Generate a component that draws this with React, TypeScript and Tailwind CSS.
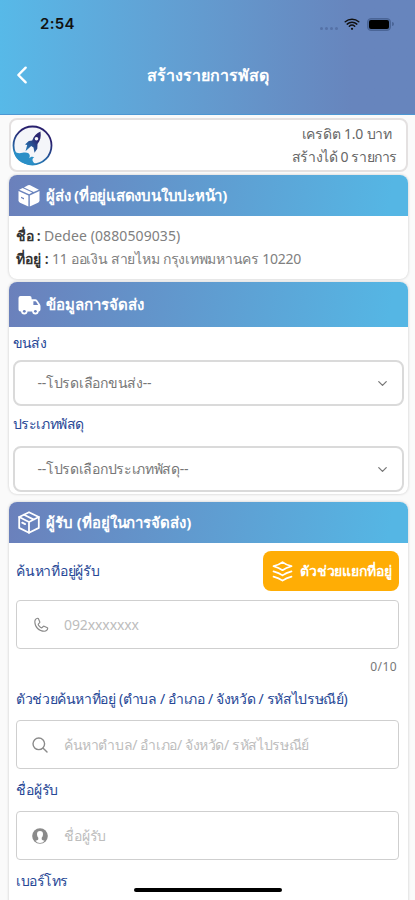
import type { ReactNode } from "react";
import { IoChevronBack, IoWifi } from "react-icons/io5";
import { PiPhone } from "react-icons/pi";
import { ChevronDown } from "lucide-react";

interface SectionProps {
  icon: ReactNode;
  title: string;
  titleClass: string;
  className: string;
  headerClass: string;
  children: ReactNode;
}

function Section({ icon, title, titleClass, className, headerClass, children }: SectionProps) {
  return (
    <section className={`flex-none overflow-hidden rounded-lg bg-white shadow-[0_0_3px_rgba(0,0,0,0.2)] ${className}`}>
      <div className={`flex items-center bg-linear-[100deg] from-[#6b80bb] to-[#55b6e4] to-95% pl-[9px] text-white ${headerClass}`}>
        <span className="flex w-7 flex-none">{icon}</span>
        <h2 className={`whitespace-nowrap text-[15px] font-bold ${titleClass}`}>{title}</h2>
      </div>
      {children}
    </section>
  );
}

function Select({ text, textClass }: { text: string; textClass: string }) {
  return (
    <button className="flex h-[46px] w-[391px] items-center justify-between rounded-lg border-2 border-[#dadada] pl-[23px] pr-[12px] text-[#777]">
      <span className={`whitespace-nowrap ${textClass}`}>{text}</span>
      <ChevronDown size={15} />
    </button>
  );
}

function Field({ icon, text, textClass }: { icon: ReactNode; text: string; textClass: string }) {
  return (
    <div className="flex h-[49px] w-[383px] items-center rounded-[4px] border border-[#cfcfcf] pl-[15px]">
      <span className="flex w-8 flex-none text-[#8a8a8a]">{icon}</span>
      <span className={`whitespace-nowrap text-[#bdbdbd] ${textClass}`}>{text}</span>
    </div>
  );
}

function BoxSolidIcon() {
  return (
    <svg width="22" height="23" viewBox="0 0 22 23" fill="currentColor">
      <path d="M10.400 11.600v10.900L2 18.700Q.5 18 .5 16.300V7.100Z" />
      <path d="M11.800 11.600 21.500 7.100v9.200q0 1.700-1.500 2.400l-8.200 3.800Z" />
      <path d="m1.200 5.800 3.400-1.700 9.600 4.300-3.100 1.800Z" />
      <path d="M5.900 3.400 10 1.300q1.100-.5 2.200 0l8.700 4.400-5.200 2.200Z" />
      <path d="m3 12.700 3 1.400v1.300L3 14Z" fill="#6b82bd" />
    </svg>
  );
}

function BoxOutlineIcon() {
  return (
    <svg width="22" height="23" viewBox="0 0 22 23" fill="none" stroke="currentColor" strokeWidth="1.800" strokeLinejoin="round" strokeLinecap="round">
      <path d="M11 1.200 20.800 6v10.900L11 21.800l-9.800-4.900V6Z" />
      <path d="M1.200 6 11 11l9.800-5M11 11v10.800M6 3.700l9.800 4.900M4.200 11.600l2.900 1.500" />
    </svg>
  );
}

function TruckIcon() {
  return (
    <svg width="23" height="20" viewBox="0 0 23 20">
      <path
        d="M2.500 1h9.200q1.900 0 1.900 2v1.300h3.600q1.300 0 2 1l2.700 4q.6.900.6 2v3.200q0 1.900-1.900 1.900H2.500Q.5 16.400.5 14.400V3q0-2 2-2Z"
        fill="currentColor"
      />
      <path d="M15.400 6.300h1.900q.6 0 1 .6l1.900 3h-4.800Z" fill="#6b82bd" />
      <circle cx="6.300" cy="16.300" r="3.200" fill="currentColor" />
      <circle cx="17.400" cy="16.300" r="3.200" fill="currentColor" />
      <circle cx="6.300" cy="16.300" r="1.400" fill="#6b82bd" />
      <circle cx="17.400" cy="16.300" r="1.400" fill="#6b82bd" />
    </svg>
  );
}

function LayersIcon() {
  return (
    <svg className="mr-[7px] flex-none" width="21" height="21" viewBox="0 0 21 21" fill="none" stroke="currentColor" strokeWidth="1.700" strokeLinejoin="round" strokeLinecap="round">
      <path d="M10.500 1.200Q14 4 19.500 5.200 14 6.600 10.500 9.200 7 6.600 1.500 5.200 7 4 10.500 1.200Z" />
      <path d="M1.500 10.400Q7 11.800 10.500 14.400 14 11.800 19.500 10.400M1.500 15.600Q7 17 10.500 19.600 14 17 19.500 15.600" />
    </svg>
  );
}

function SearchIcon() {
  return (
    <svg width="16" height="16" viewBox="0 0 16 16" fill="none" stroke="currentColor" strokeWidth="1.400" strokeLinecap="round">
      <circle cx="6.800" cy="6.800" r="5.800" />
      <path d="m11.200 11.200 3.800 3.800" />
    </svg>
  );
}

function AvatarIcon() {
  return (
    <svg width="16" height="16" viewBox="0 0 16 16">
      <circle cx="8" cy="8" r="7.800" fill="currentColor" />
      <path
        d="M8 3q3 0 3 3.200 0 2.200-1.300 3.500v1.500q.2.700 1.900 1.200l1 .4Q10.900 15 8 15t-4.600-2.200l1-.4q1.700-.5 1.900-1.200V9.700Q5 8.400 5 6.200 5 3 8 3Z"
        fill="#fff"
      />
    </svg>
  );
}

function Logo() {
  return (
    <svg width="41" height="41" viewBox="0 0 41 41">
      <defs>
        <linearGradient id="ring" x1="0.7" y1="0" x2="0.3" y2="1">
          <stop offset="0.25" stopColor="#28206d" />
          <stop offset="1" stopColor="#258fc6" />
        </linearGradient>
        <linearGradient id="rocket" x1="1" y1="0" x2="0" y2="1">
          <stop offset="0.3" stopColor="#2a2670" />
          <stop offset="1" stopColor="#2589c1" />
        </linearGradient>
      </defs>
      <circle cx="20.500" cy="20.500" r="19" fill="#f4f5f9" stroke="url(#ring)" strokeWidth="1.800" />
      <path
        d="M1.500 24.500c2.500 4 5.500 4 9 3.300 5-1.200 9 1 6.600 5.500 1.400-1.900 4-2.100 5.200-.8-2.600.5-2.600 4.600 1.500 6.700C12 41.500 2 35 1.500 24.500Z"
        fill="#2b8fc7"
      />
      <path
        d="M28.500 6.500c.8 5.500-.2 9-3 12.500l-.2 4.700-2.800 4-1-5.200-2.300-1.500-5.700 5.300 1.700-6.200-2.200-.7 3.800-3.500 3.400-.5c1.500-4 4.300-7.200 8.300-8.900Z"
        fill="url(#rocket)"
      />
      <circle cx="24.500" cy="13.700" r="1.800" fill="#f4f5f9" />
    </svg>
  );
}

export default function App() {
  return (
    <div className="relative flex h-[900px] w-[415px] flex-col overflow-hidden bg-[#fafafa] font-['Noto_Sans',sans-serif] text-sm">
      <header className="h-[115px] flex-none border-b border-[#4d97d3] bg-linear-to-r from-[#57b9e8] to-[#6785bd] to-85% pt-3">
        <div className="flex h-6 items-center justify-between pl-10 pr-[21px] text-[#111]">
          <span className="font-['Inter',sans-serif] text-[15px] font-semibold tracking-[0.3px]">2:54</span>
          <div className="flex items-center">
            <span className="flex gap-[2px] pt-2">
              {[0, 1, 2, 3].map((n) => (
                <i key={n} className="size-[3px] rounded-full bg-[#5572a7]" />
              ))}
            </span>
            <IoWifi className="ml-[5px]" size={18} />
            <span className="ml-[6px] flex h-[13px] w-6 rounded-[4px] border border-[#4a6597] bg-[#536fa2] p-px">
              <i className="w-full rounded-[2px] bg-black" />
            </span>
            <i className="ml-px h-1 w-[2px] rounded-r bg-[#4a6597]" />
          </div>
        </div>
        <div className="mt-5 grid h-[38px] grid-cols-[60px_1fr_60px] items-center text-white">
          <IoChevronBack className="ml-[9px]" size={26} />
          <h1 className="whitespace-nowrap text-center text-base font-bold">สร้างรายการพัสดุ</h1>
        </div>
      </header>

      <main className="flex flex-col pl-[9px] pr-[7px] pt-[3px]">
        <div className="flex h-[54px] flex-none items-center justify-between rounded-lg border-2 border-[#e4e1e1] bg-white pl-px pr-[9px] text-[#666]">
          <Logo />
          <div className="flex flex-col text-right leading-[23px]">
            <span className="pr-[5px] tracking-[-0.2px]">เครดิต 1.0 บาท</span>
            <span className="tracking-[-0.4px]">สร้างได้ 0 รายการ</span>
          </div>
        </div>

        <Section
          icon={<BoxSolidIcon />}
          title="ผู้ส่ง (ที่อยู่แสดงบนใบปะหน้า)"
          titleClass="tracking-[-0.23px]"
          className="mt-[3px] h-[104px]"
          headerClass="h-[41px]"
        >
          <div className="pl-[7px] pt-2 leading-[23px] text-[#808080]">
            <p className="whitespace-nowrap">
              <b className="font-semibold tracking-[-0.3px] text-[#333]">ชื่อ :</b>{" "}
              <span className="tracking-[0.1px]">Dedee (0880509035)</span>
            </p>
            <p className="whitespace-nowrap tracking-[-0.25px]">
              <b className="font-semibold tracking-normal text-[#333]">ที่อยู่ :</b> 11 ออเงิน สายไหม กรุงเทพมหานคร 10220
            </p>
          </div>
        </Section>

        <Section
          icon={<TruckIcon />}
          title="ข้อมูลการจัดส่ง"
          titleClass=""
          className="mt-[3px] h-[212px]"
          headerClass="h-[45px]"
        >
          <div className="flex flex-col items-start pl-[3.5px] text-[#264796]">
            <label className="mt-[5px] h-7 leading-[22px] tracking-[-0.6px]">ขนส่ง</label>
            <Select text="--โปรดเลือกขนส่ง--" textClass="tracking-[-0.27px]" />
            <label className="mt-[7px] h-[33px] leading-[22px] tracking-[-0.4px]">ประเภทพัสดุ</label>
            <Select text="--โปรดเลือกประเภทพัสดุ--" textClass="tracking-[-0.3px]" />
          </div>
        </Section>

        <Section
          icon={<BoxOutlineIcon />}
          title="ผู้รับ (ที่อยู่ในการจัดส่ง)"
          titleClass="tracking-[-0.05px]"
          className="mt-2 h-[420px]"
          headerClass="h-[41px]"
        >
          <div className="flex flex-col items-start pl-[7px] text-[#264796]">
            <div className="mt-2 flex h-10 w-[383px] items-center justify-between">
              <label className="whitespace-nowrap tracking-[-0.25px]">ค้นหาที่อยู่ผู้รับ</label>
              <button className="flex h-10 w-[136px] items-center rounded-lg bg-[#ffad05] pl-[9px] font-bold text-white">
                <LayersIcon />
                <span className="whitespace-nowrap tracking-[-0.15px]">ตัวช่วยแยกที่อยู่</span>
              </button>
            </div>
            <div className="mt-[9px]">
              <Field icon={<PiPhone size={18} />} text="092xxxxxxx" textClass="tracking-[-0.1px]" />
            </div>
            <span className="mt-[10px] h-[22px] w-[381px] text-right text-xs tracking-[0.4px] text-[#777]">0/10</span>
            <label className="mt-[7px] h-8 whitespace-nowrap leading-[22px] tracking-[-0.36px]">
              ตัวช่วยค้นหาที่อยู่ (ตำบล / อำเภอ / จังหวัด / รหัสไปรษณีย์)
            </label>
            <Field
              icon={<SearchIcon />}
              text="ค้นหาตำบล/ อำเภอ/ จังหวัด/ รหัสไปรษณีย์"
              textClass="tracking-[-0.38px]"
            />
            <label className="mt-[10px] h-8 leading-[22px] tracking-[-0.15px]">ชื่อผู้รับ</label>
            <Field icon={<AvatarIcon />} text="ชื่อผู้รับ" textClass="tracking-[-0.15px]" />
            <label className="mt-[10px] leading-[22px] tracking-[-0.5px]">เบอร์โทร</label>
          </div>
        </Section>
      </main>

      <div className="absolute bottom-[8px] left-[134px] h-1 w-[148px] rounded-full bg-black" />
    </div>
  );
}
